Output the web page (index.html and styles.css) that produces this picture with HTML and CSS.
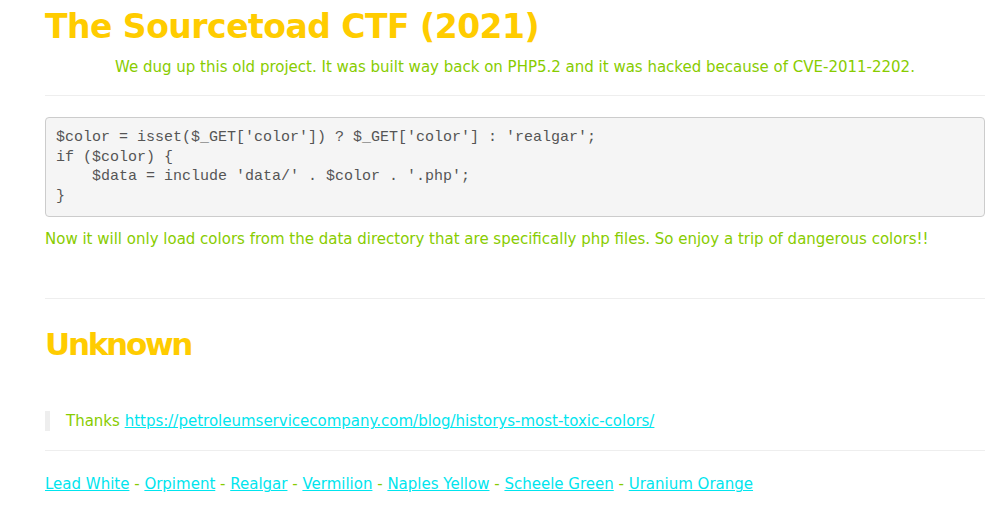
FILE: index.html
```html
<!DOCTYPE html>
<html>
<head>
<meta charset="utf-8">
<link rel="stylesheet" href="styles.css">
</head>
<body>
<div class="container">
  <h1 class="title">The Sourcetoad CTF (2021)</h1>
  <p class="lead">We dug up this old project. It was built way back on PHP5.2 and it was hacked because of CVE-2011-2202.</p>
  <hr class="rule rule-top">
  <pre class="code">$color = isset($_GET['color']) ? $_GET['color'] : 'realgar';
if ($color) {
    $data = include 'data/' . $color . '.php';
}</pre>
  <p class="note">Now it will only load colors from the data directory that are specifically php files. So enjoy a trip of dangerous colors!!</p>
  <hr class="rule rule-mid">
  <h1 class="title title-unknown">Unknown</h1>
  <blockquote class="quote">Thanks <a href="#">https://petroleumservicecompany.com/blog/historys-most-toxic-colors/</a></blockquote>
  <hr class="rule rule-low">
  <p class="links"><a href="#">Lead White</a> - <a href="#">Orpiment</a> - <a href="#">Realgar</a> - <a href="#">Vermilion</a> - <a href="#">Naples Yellow</a> - <a href="#">Scheele Green</a> - <a href="#">Uranium Orange</a></p>
</div>
</body>
</html>
```
FILE: styles.css
```css
html, body {
  margin: 0;
  padding: 0;
  background: #fff;
}
body {
  font-family: "DejaVu Sans", Verdana, sans-serif;
  font-size: 15px;
  line-height: 20px;
  color: #88cc00;
}
.container {
  width: 940px;
  margin: 0 0 0 45px;
}
.title {
  margin: 0;
  font-size: 33px;
  line-height: 54px;
  font-weight: bold;
  letter-spacing: -0.5px;
  color: #ffcc00;
}
.lead {
  margin: 3px 0 0;
  text-align: center;
}
.rule {
  border: 0;
  border-top: 1px solid #eeeeee;
  margin: 0;
}
.rule-top { margin-top: 18px; }
.code {
  margin: 21px 0 0;
  padding: 10px;
  background: #f5f5f5;
  border: 1px solid #cccccc;
  border-radius: 4px;
  font-family: "Liberation Mono", "Courier New", monospace;
  font-size: 15px;
  line-height: 19.6px;
  color: #555;
}
.note {
  margin: 12px 0 0;
}
.rule-mid { margin-top: 49px; }
.title-unknown {
  margin-top: 18px;
  font-size: 31px;
  letter-spacing: -2.25px;
}
.quote {
  margin: 40px 0 0;
  padding: 0 0 0 16px;
  border-left: 5px solid #eeeeee;
  line-height: 20px;
}
.rule-low { margin-top: 19px; }
a {
  color: #00e5ee;
  text-decoration: underline;
}
.links {
  margin: 23px 0 0;
}
```
